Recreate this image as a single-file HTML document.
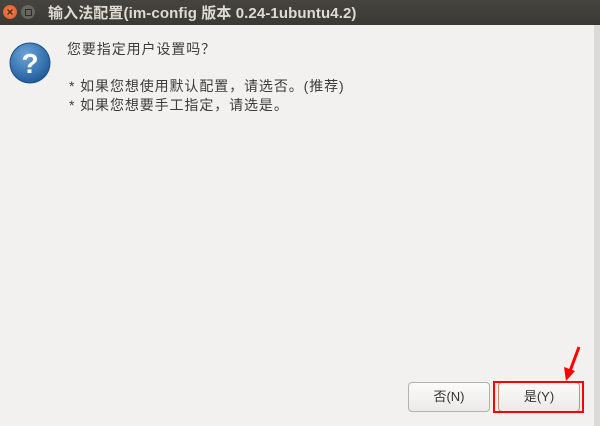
<html><head><style>
body{margin:0;width:600px;height:426px;background:#f2f1f0;font-family:"Liberation Sans","Noto Sans CJK SC",sans-serif;position:relative;overflow:hidden}
.tb{position:absolute;left:0;top:0;width:600px;height:25px;background:linear-gradient(#45443f,#3a3935);color:#dfdbd2;font-weight:bold;font-size:15px}
.t{position:absolute;left:48px;top:2px;white-space:nowrap;letter-spacing:0.1px}
.c{position:absolute;top:5px;width:14px;height:14px;border-radius:50%}
.txt{position:absolute;font-size:14px;color:#3c3c3c;white-space:nowrap;letter-spacing:0.9px}
.btn{position:absolute;top:382px;height:28px;border:1px solid #b4b2ae;border-radius:4px;background:linear-gradient(#fbfbfa,#eceae8);font-size:13px;color:#333;text-align:center;line-height:28px}
</style></head><body>
<div class="tb"><div class="c" style="left:3px;background:radial-gradient(#f48a5c,#d8501e)"><svg width="14" height="14" style="position:absolute;left:0;top:0"><path d="M4.5 4.5L9.5 9.5M9.5 4.5L4.5 9.5" stroke="#5a2a10" stroke-width="1.5"/></svg></div>
<div class="c" style="left:21px;background:#67655f"><div style="position:absolute;left:4px;top:4px;width:5px;height:5px;border:1px solid #2e2d2a"></div></div>
<div class="t">输入法配置(im-config 版本 0.24-1ubuntu4.2)</div></div>
<svg style="position:absolute;left:9px;top:42px" width="42" height="42"><defs><radialGradient id="g" cx="40%" cy="30%" r="70%"><stop offset="0" stop-color="#6ea4d8"/><stop offset="1" stop-color="#1f5d9c"/></radialGradient></defs><circle cx="21" cy="21" r="20" fill="url(#g)" stroke="#1c4f86"/><text x="21" y="31" text-anchor="middle" font-family="Liberation Sans" font-weight="bold" font-size="28" fill="#fff">?</text></svg>
<div class="txt" style="left:67px;top:39px">您要指定用户设置吗？</div>
<div class="txt" style="left:69px;top:76px">* 如果您想使用默认配置，请选否。(推荐)</div>
<div class="txt" style="left:69px;top:95px">* 如果您想要手工指定，请选是。</div>
<div class="btn" style="left:408px;width:80px">否(N)</div>
<div class="btn" style="left:498px;width:80px;border-color:#d08a70">是(Y)</div>
<div style="position:absolute;left:493px;top:381px;width:87px;height:28px;border:2px solid #f00"></div>
<svg style="position:absolute;left:560px;top:345px" width="25" height="40"><line x1="19" y1="2" x2="10" y2="26" stroke="#f00" stroke-width="3"/><polygon points="6,36 4,22 15,26" fill="#f00"/></svg>
<div style="position:absolute;left:594px;top:25px;width:6px;height:401px;background:#dcdad6"></div>
</body></html>
